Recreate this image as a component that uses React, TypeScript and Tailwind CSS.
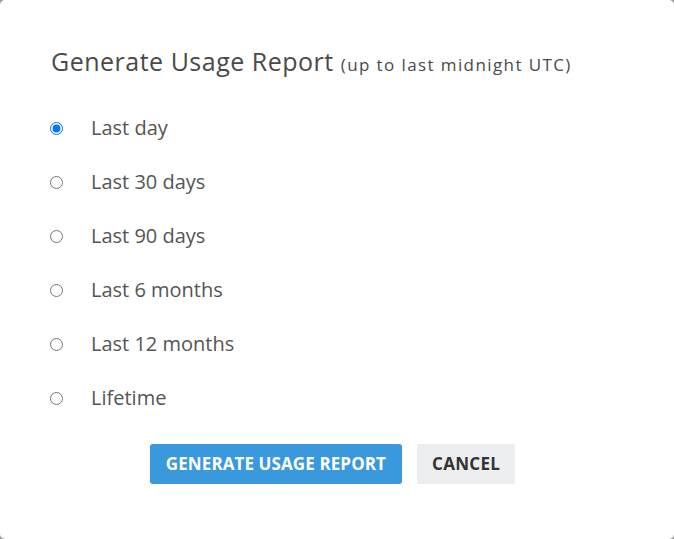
const options = [
  "Last day",
  "Last 30 days",
  "Last 90 days",
  "Last 6 months",
  "Last 12 months",
  "Lifetime",
];

export default function App() {
  return (
    <div className="w-[674px] h-[539px] bg-[#9a9a9a] font-['Open_Sans',sans-serif]">
      <div className="w-full h-full bg-white rounded-[5px] pt-[44px] px-[51px]">
        <h2 className="text-[25px] leading-[34px] text-[#4a4a4a] font-normal tracking-[0.5px]">
          Generate Usage Report{" "}
          <span className="text-[17px] tracking-[1.4px] text-[#4a4a4a]">(up to last midnight UTC)</span>
        </h2>

        <div className="mt-[19px] flex flex-col">
          {options.map((label, i) => (
            <label key={label} className="flex items-center h-[54px] -ml-[1px]">
              <input
                type="radio"
                name="range"
                defaultChecked={i === 0}
                className="w-[13px] h-[13px] m-0 accent-[#0075ff]"
              />
              <span className="ml-[28px] text-[20px] text-[#555]">{label}</span>
            </label>
          ))}
        </div>

        <div className="mt-[19px] flex justify-center gap-[15px] pr-[9px]">
          <button className="h-[40px] px-[16px] rounded-[3px] bg-[#3a99dc] text-white font-bold text-[17px] tracking-[0.1px] uppercase">
            Generate Usage Report
          </button>
          <button className="h-[40px] px-[15px] rounded-[3px] bg-[#eceeef] text-[#333] font-bold text-[17px] tracking-[0.3px] uppercase">
            Cancel
          </button>
        </div>
      </div>
    </div>
  );
}
